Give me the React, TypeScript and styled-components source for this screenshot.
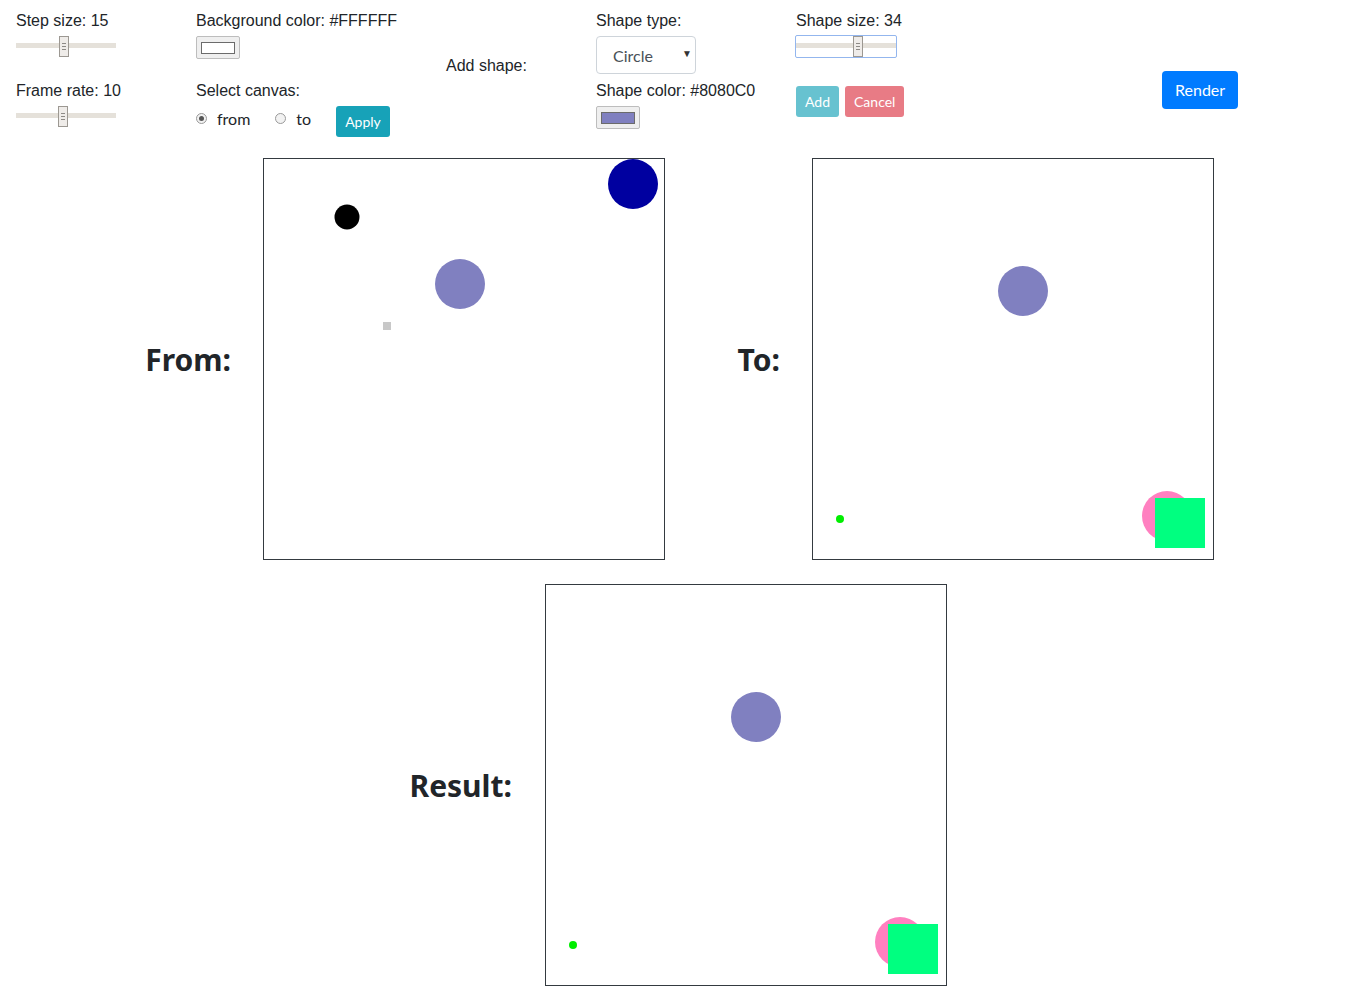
import React from "react";
import styled, { createGlobalStyle } from "styled-components";

const GlobalStyle = createGlobalStyle`
  html, body { margin: 0; padding: 0; background: #fff; overflow: hidden; }
  body { font-family: "Liberation Sans", Arial, sans-serif; color: #212529; }
`;

const UI_FONT = `"Lato", "Noto Sans", sans-serif`;

const Page = styled.div`
  width: 1349px;
`;

const Controls = styled.div`
  display: flex;
  padding: 9px 16px 0;
  height: 128px;
`;

const Column = styled.div<{ $w: number; $top?: number }>`
  display: flex;
  flex-direction: column;
  align-items: flex-start;
  width: ${(p) => p.$w}px;
  flex: none;
  padding-top: ${(p) => p.$top ?? 0}px;
`;

const Label = styled.div<{ $mt?: number }>`
  font-family: "Liberation Sans", Arial, sans-serif;
  font-size: 16px;
  line-height: 24px;
  color: #212529;
  margin-top: ${(p) => p.$mt ?? 0}px;
  white-space: nowrap;
`;

const SliderBox = styled.div<{ $mt?: number; $focused?: boolean }>`
  position: relative;
  width: 100px;
  height: 21px;
  margin-top: ${(p) => p.$mt ?? 0}px;
  box-sizing: content-box;
  border: ${(p) => (p.$focused ? "1px solid #93b6ee" : "none")};
  border-radius: 2px;
  margin-left: ${(p) => (p.$focused ? -1 : 0)}px;
`;

const Track = styled.div`
  position: absolute;
  left: 0;
  right: 0;
  top: 7px;
  height: 5px;
  background: #e5e1da;
`;

const Thumb = styled.div`
  position: absolute;
  top: 0;
  width: 10px;
  height: 21px;
  box-sizing: border-box;
  border: 1px solid #9c9892;
  background: #efece9;
  display: flex;
  flex-direction: column;
  align-items: center;
  justify-content: center;
  gap: 2px;
`;

const Grip = styled.span`
  display: block;
  width: 4px;
  height: 1px;
  background: #8d8a86;
`;

function Slider({ left, mt, focused }: { left: number; mt?: number; focused?: boolean }) {
  return (
    <SliderBox $mt={mt} $focused={focused}>
      <Track />
      <Thumb style={{ left }}>
        <Grip />
        <Grip />
        <Grip />
      </Thumb>
    </SliderBox>
  );
}

const Swatch = styled.div<{ $mt?: number }>`
  width: 44px;
  height: 23px;
  box-sizing: border-box;
  margin-top: ${(p) => p.$mt ?? 0}px;
  border: 1px solid #bdbdbd;
  border-radius: 2px;
  background: #efefef;
  display: flex;
  align-items: center;
  justify-content: center;
`;

const SwatchFill = styled.div<{ $color: string }>`
  width: 34px;
  height: 12px;
  box-sizing: border-box;
  border: 1px solid #6b6b6b;
  background: ${(p) => p.$color};
`;

const RadioRow = styled.div<{ $mt?: number }>`
  display: flex;
  align-items: center;
  height: 31px;
  margin-top: ${(p) => p.$mt ?? 0}px;
`;

const RadioItem = styled.label<{ $gap: number }>`
  display: flex;
  align-items: center;
  margin-right: ${(p) => p.$gap}px;
  margin-bottom: 7px;
  font-family: ${UI_FONT};
  font-size: 16px;
  color: #212529;
`;

const RadioDot = styled.span<{ $checked?: boolean }>`
  width: 11px;
  height: 11px;
  box-sizing: border-box;
  border-radius: 50%;
  border: 1px solid #9a9a9a;
  background: #f2f2f2;
  margin-right: 10px;
  display: flex;
  align-items: center;
  justify-content: center;
  &::after {
    content: "";
    display: ${(p) => (p.$checked ? "block" : "none")};
    width: 5px;
    height: 5px;
    border-radius: 50%;
    background: #555;
  }
`;

const Button = styled.button<{ $variant: "info" | "danger" | "primary"; $size?: "sm" | "md"; $disabled?: boolean }>`
  font-family: ${UI_FONT};
  font-size: ${(p) => (p.$size === "md" ? 16 : 14)}px;
  line-height: 1.5;
  padding: ${(p) => (p.$size === "md" ? "6px 12px" : "4px 8px")};
  border: 1px solid transparent;
  border-radius: ${(p) => (p.$size === "md" ? 4 : 3)}px;
  color: #fff;
  cursor: pointer;
  opacity: ${(p) => (p.$disabled ? 0.65 : 1)};
  background: ${(p) => (p.$variant === "info" ? "#17a2b8" : p.$variant === "danger" ? "#dc3545" : "#007bff")};
  margin-right: ${(p) => (p.$variant === "info" && p.$disabled ? 6 : 0)}px;
`;

const SelectBox = styled.div<{ $mt?: number }>`
  position: relative;
  width: 100px;
  height: 38px;
  box-sizing: border-box;
  margin-top: ${(p) => p.$mt ?? 0}px;
  border: 1px solid #ced4da;
  border-radius: 4px;
  background: #fff;
  display: flex;
  align-items: center;
  padding-left: 16px;
  font-family: ${UI_FONT};
  font-size: 16px;
  color: #495057;
`;

const Caret = styled.span`
  position: absolute;
  right: 3px;
  top: 10px;
  font-size: 10px;
  color: #333;
`;

const ButtonRow = styled.div<{ $mt?: number }>`
  display: flex;
  margin-top: ${(p) => p.$mt ?? 0}px;
`;

const CanvasRow = styled.div<{ $pl: number; $mt: number }>`
  display: flex;
  align-items: center;
  padding-left: ${(p) => p.$pl}px;
  margin-top: ${(p) => p.$mt}px;
`;

const Block = styled.div<{ $ml?: number }>`
  display: flex;
  align-items: center;
  margin-left: ${(p) => p.$ml ?? 0}px;
`;

const Heading = styled.h2<{ $w: number; $gap: number }>`
  margin: 0 ${(p) => p.$gap}px 0 0;
  width: ${(p) => p.$w}px;
  text-align: right;
  font-family: "Noto Sans", "Open Sans", sans-serif;
  font-weight: 700;
  font-size: 30px;
  line-height: 1.2;
  color: #212529;
  padding-top: 2px;
`;

const CanvasFrame = styled.div`
  width: 400px;
  height: 400px;
  border: 1px solid #343a40;
  background: #fff;
  overflow: hidden;
  flex: none;
`;

type Shape =
  | { kind: "circle"; cx: number; cy: number; r: number; fill: string }
  | { kind: "rect"; x: number; y: number; s: number; fill: string };

const fromShapes: Shape[] = [
  { kind: "circle", cx: 369, cy: 25, r: 25, fill: "#0000a0" },
  { kind: "circle", cx: 83, cy: 58, r: 12.5, fill: "#000000" },
  { kind: "circle", cx: 196, cy: 125, r: 25, fill: "#8080c0" },
  { kind: "rect", x: 119, y: 163, s: 8, fill: "#c8c8c8" },
];

const toShapes: Shape[] = [
  { kind: "circle", cx: 210, cy: 132, r: 25, fill: "#8080c0" },
  { kind: "circle", cx: 27, cy: 360, r: 4, fill: "#00ee00" },
  { kind: "circle", cx: 354, cy: 357, r: 25, fill: "#ff80c0" },
  { kind: "rect", x: 342, y: 339, s: 50, fill: "#00ff80" },
];

function Canvas({ shapes }: { shapes: Shape[] }) {
  return (
    <CanvasFrame>
      <svg width="400" height="400" viewBox="0 0 400 400">
        {shapes.map((s, i) =>
          s.kind === "circle" ? (
            <circle key={i} cx={s.cx} cy={s.cy} r={s.r} fill={s.fill} />
          ) : (
            <rect key={i} x={s.x} y={s.y} width={s.s} height={s.s} fill={s.fill} />
          )
        )}
      </svg>
    </CanvasFrame>
  );
}

export default function App() {
  return (
    <Page>
      <GlobalStyle />
      <Controls>
        <Column $w={180}>
          <Label>Step size: 15</Label>
          <Slider left={43} mt={3} />
          <Label $mt={22}>Frame rate: 10</Label>
          <Slider left={42} mt={3} />
        </Column>
        <Column $w={250}>
          <Label>Background color: #FFFFFF</Label>
          <Swatch $mt={3}>
            <SwatchFill $color="#ffffff" />
          </Swatch>
          <Label $mt={20}>Select canvas:</Label>
          <RadioRow $mt={3}>
            <RadioItem $gap={25}>
              <RadioDot $checked />
              from
            </RadioItem>
            <RadioItem $gap={25}>
              <RadioDot />
              to
            </RadioItem>
            <Button $variant="info">Apply</Button>
          </RadioRow>
        </Column>
        <Column $w={150} $top={45}>
          <Label>Add shape:</Label>
        </Column>
        <Column $w={200}>
          <Label>Shape type:</Label>
          <SelectBox $mt={3}>
            Circle
            <Caret>▼</Caret>
          </SelectBox>
          <Label $mt={5}>Shape color: #8080C0</Label>
          <Swatch $mt={3}>
            <SwatchFill $color="#8080c0" />
          </Swatch>
        </Column>
        <Column $w={366}>
          <Label>Shape size: 34</Label>
          <Slider left={57} mt={2} focused />
          <ButtonRow $mt={28}>
            <Button $variant="info" $disabled>Add</Button>
            <Button $variant="danger" $disabled>Cancel</Button>
          </ButtonRow>
        </Column>
        <Column $w={120} $top={62}>
          <Button $variant="primary" $size="md">Render</Button>
        </Column>
      </Controls>
      <CanvasRow $pl={111} $mt={21}>
        <Block>
          <Heading $w={120} $gap={32}>From:</Heading>
          <Canvas shapes={fromShapes} />
        </Block>
        <Block $ml={15}>
          <Heading $w={100} $gap={32}>To:</Heading>
          <Canvas shapes={toShapes} />
        </Block>
      </CanvasRow>
      <CanvasRow $pl={392} $mt={24}>
        <Block>
          <Heading $w={120} $gap={33}>Result:</Heading>
          <Canvas shapes={toShapes} />
        </Block>
      </CanvasRow>
    </Page>
  );
}
